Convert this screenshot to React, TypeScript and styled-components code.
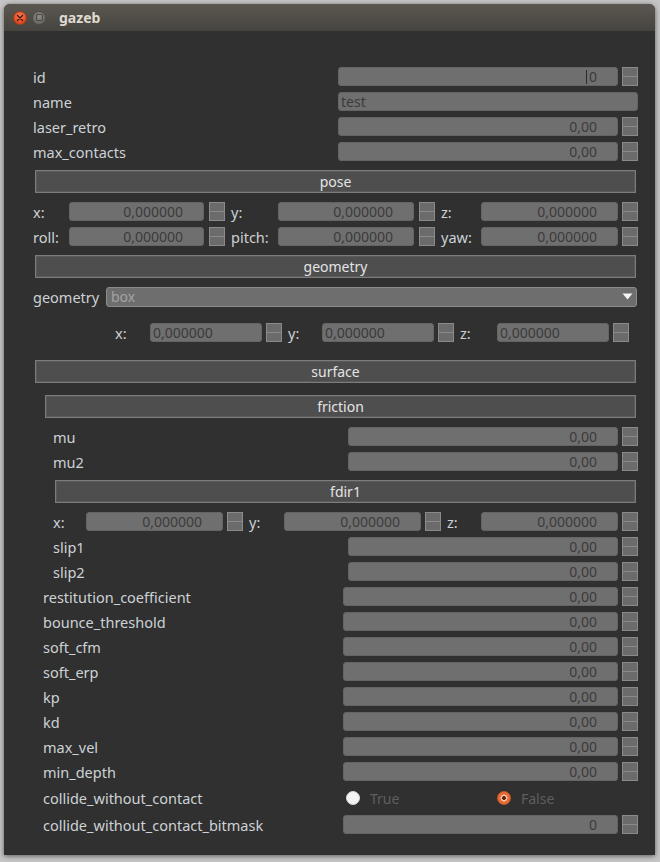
import React from "react";
import styled, { createGlobalStyle } from "styled-components";

const GlobalStyle = createGlobalStyle`
  html, body { margin: 0; padding: 0; }
  body { background: #c5c5c5; font-family: "Noto Sans", "DejaVu Sans", sans-serif; }
`;

const Screen = styled.div`
  width: 660px;
  height: 862px;
  box-sizing: border-box;
  padding: 4px 5px 7px 4px;
  background: #c5c5c5;
`;

const Window = styled.div`
  height: 100%;
  display: flex;
  flex-direction: column;
  border-radius: 6px 6px 0 0;
  overflow: hidden;
  background: #303030;
  box-shadow: 0 1px 5px rgba(0, 0, 0, 0.55);
`;

const TitleBar = styled.div`
  flex: none;
  height: 27px;
  display: flex;
  align-items: center;
  padding-left: 9px;
  background: linear-gradient(to bottom, #5b5750, #46443f);
`;

const WinButton = styled.span<{ $close?: boolean }>`
  flex: none;
  width: 14px;
  height: 14px;
  border-radius: 50%;
  box-sizing: border-box;
  display: flex;
  align-items: center;
  justify-content: center;
  margin-right: ${(p) => (p.$close ? 5 : 13)}px;
  background: ${(p) =>
    p.$close
      ? "radial-gradient(circle at 50% 35%, #f57f58, #e04a1f 70%)"
      : "radial-gradient(circle at 50% 35%, #8c8a85, #6c6a65 70%)"};
  border: 1px solid ${(p) => (p.$close ? "#a53a1a" : "#4f4d49")};
`;

const MinSquare = styled.span`
  width: 5px;
  height: 5px;
  border: 1px solid #4a4844;
  border-radius: 1px;
`;

const Title = styled.span`
  color: #dfdbd2;
  font-weight: bold;
  font-size: 14px;
`;

const Body = styled.div`
  flex: 1;
  display: flex;
  flex-direction: column;
  padding: 33px 17px 0 29px;
`;

const Row = styled.div<{ $indent?: number; $h?: number }>`
  flex: none;
  display: flex;
  align-items: center;
  height: ${(p) => p.$h ?? 25}px;
  padding-left: ${(p) => p.$indent ?? 0}px;
`;

const Label = styled.span`
  flex: 1;
  color: #cdd2d6;
  font-size: 14.5px;
  white-space: nowrap;
`;

const FieldGroup = styled.div<{ $w: number }>`
  flex: none;
  width: ${(p) => p.$w}px;
  display: flex;
  align-items: center;
  gap: 4px;
`;

const Input = styled.div<{ $left?: boolean }>`
  flex: 1;
  min-width: 0;
  height: 19px;
  box-sizing: border-box;
  border-radius: 3px;
  background: #6f6f6f;
  border: 1px solid #646464;
  color: #3b3b3b;
  font-size: 14px;
  display: flex;
  align-items: center;
  justify-content: ${(p) => (p.$left ? "flex-start" : "flex-end")};
  padding: ${(p) => (p.$left ? "0 0 0 2px" : "0 20px 0 2px")};
  white-space: nowrap;
  overflow: hidden;
`;

const Caret = styled.span`
  width: 1px;
  height: 14px;
  background: #2a2a2a;
  margin-right: 2px;
`;

const SpinBox = styled.div`
  flex: none;
  width: 16px;
  height: 19px;
  box-sizing: border-box;
  display: flex;
  flex-direction: column;
  justify-self: end;
`;

const SpinHalf = styled.span`
  flex: 1;
  border: 1px solid #8a8a8a;
  background: #6b6b6b;
  & + & {
    border-top: none;
  }
`;

const Header = styled.div<{ $indent?: number }>`
  flex: none;
  height: 23px;
  box-sizing: border-box;
  margin: 6px 2px 6px ${(p) => (p.$indent ?? 0) + 2}px;
  border: 1px solid #7c7c7c;
  box-shadow: inset 0 0 0 1px #5a5a5a;
  background: #4e4e4e;
  color: #e4e4e4;
  font-size: 14px;
  display: flex;
  align-items: center;
  justify-content: center;
`;

const VecRow = styled.div<{ $cols: string; $indent?: number; $mt?: number; $mb?: number; $mr?: number }>`
  flex: none;
  display: grid;
  grid-template-columns: ${(p) => p.$cols};
  align-items: center;
  height: 25px;
  margin: ${(p) => `${p.$mt ?? 0}px ${p.$mr ?? 0}px ${p.$mb ?? 0}px ${p.$indent ?? 0}px`};
`;

const VecLabel = styled.span`
  color: #cdd2d6;
  font-size: 14.5px;
  padding-left: 6px;
  white-space: nowrap;
  &:first-child {
    padding-left: 0;
  }
`;

const Combo = styled.div`
  flex: none;
  width: 531px;
  margin-right: 1px;
  height: 20px;
  box-sizing: border-box;
  border-radius: 3px;
  border: 1px solid #8c8c8c;
  background: #6e6e6e;
  color: #a2a2a2;
  font-size: 14px;
  display: flex;
  align-items: center;
  justify-content: space-between;
  padding: 0 3px 0 4px;
`;

const RadioGroup = styled.div`
  flex: none;
  width: 295px;
  box-sizing: border-box;
  padding-left: 3px;
  display: grid;
  grid-template-columns: 151px 1fr;
`;

const RadioOption = styled.label`
  display: flex;
  align-items: center;
  gap: 10px;
  color: #5f5f5f;
  font-size: 14px;
`;

const RadioDot = styled.span<{ $checked?: boolean }>`
  width: 14px;
  height: 14px;
  border-radius: 50%;
  box-sizing: border-box;
  background: ${(p) =>
    p.$checked
      ? "radial-gradient(circle, #5a2a14 0 1.8px, #f6c3a6 2.2px 3.2px, #e86b35 3.8px)"
      : "#f3f3f3"};
  border: 1px solid ${(p) => (p.$checked ? "#c65525" : "#d8d8d8")};
`;

const Spinner = () => (
  <SpinBox>
    <SpinHalf />
    <SpinHalf />
  </SpinBox>
);

type NumRowProps = { label: string; value?: string; indent?: number; caret?: boolean };

const NumRow = ({ label, value = "0,00", indent = 0, caret }: NumRowProps) => (
  <Row $indent={indent}>
    <Label>{label}</Label>
    <FieldGroup $w={300 - indent / 2}>
      <Input>
        {caret && <Caret />}
        {value}
      </Input>
      <Spinner />
    </FieldGroup>
  </Row>
);

type VecProps = {
  labels: string[];
  cols: string;
  indent?: number;
  left?: boolean;
  mt?: number;
  mb?: number;
  mr?: number;
};

const Vec = ({ labels, cols, indent, left, mt, mb, mr }: VecProps) => (
  <VecRow $cols={cols} $indent={indent} $mt={mt} $mb={mb} $mr={mr}>
    {labels.map((l) => (
      <React.Fragment key={l}>
        <VecLabel>{l}</VecLabel>
        <Input $left={left}>0,000000</Input>
        <Spinner />
      </React.Fragment>
    ))}
  </VecRow>
);

const POSE_COLS = "36px 135px 21px 53px 136px 21px 46px 137px 20px";
const FDIR_COLS = "33px 137px 20px 41px 137px 20px 40px 137px 20px";
const GEO_COLS = "35px 112px 20px 40px 112px 20px 43px 112px 20px";

const surfaceRows = [
  "restitution_coefficient",
  "bounce_threshold",
  "soft_cfm",
  "soft_erp",
  "kp",
  "kd",
  "max_vel",
  "min_depth",
];

export default function App() {
  return (
    <>
      <GlobalStyle />
      <Screen>
        <Window>
          <TitleBar>
            <WinButton $close>
              <svg width="8" height="8" viewBox="0 0 8 8">
                <path d="M1.5 1.5 L6.5 6.5 M6.5 1.5 L1.5 6.5" stroke="#4a1608" strokeWidth="1.4" strokeLinecap="round" />
              </svg>
            </WinButton>
            <WinButton>
              <MinSquare />
            </WinButton>
            <Title>gazeb</Title>
          </TitleBar>
          <Body>
            <NumRow label="id" value="0" caret />
            <Row>
              <Label>name</Label>
              <FieldGroup $w={300}>
                <Input $left>test</Input>
              </FieldGroup>
            </Row>
            <NumRow label="laser_retro" />
            <NumRow label="max_contacts" />

            <Header>pose</Header>
            <Vec labels={["x:", "y:", "z:"]} cols={POSE_COLS} />
            <Vec labels={["roll:", "pitch:", "yaw:"]} cols={POSE_COLS} />

            <Header>geometry</Header>
            <Row>
              <Label>geometry</Label>
              <Combo>
                <span>box</span>
                <svg width="11" height="7" viewBox="0 0 11 7">
                  <path d="M0.5 0.5 H10.5 L5.5 6.5 Z" fill="#f4f4f4" />
                </svg>
              </Combo>
            </Row>
            <Vec labels={["x:", "y:", "z:"]} cols={GEO_COLS} indent={82} mr={9} left mt={11} mb={9} />

            <Header>surface</Header>
            <Header $indent={10}>friction</Header>
            <NumRow label="mu" indent={20} />
            <NumRow label="mu2" indent={20} />
            <Header $indent={20}>fdir1</Header>
            <Vec labels={["x:", "y:", "z:"]} cols={FDIR_COLS} indent={20} />
            <NumRow label="slip1" indent={20} />
            <NumRow label="slip2" indent={20} />
            {surfaceRows.map((l) => (
              <NumRow key={l} label={l} indent={10} />
            ))}
            <Row $indent={10} $h={28}>
              <Label>collide_without_contact</Label>
              <RadioGroup>
                <RadioOption>
                  <RadioDot />
                  True
                </RadioOption>
                <RadioOption>
                  <RadioDot $checked />
                  False
                </RadioOption>
              </RadioGroup>
            </Row>
            <NumRow label="collide_without_contact_bitmask" value="0" indent={10} />
          </Body>
        </Window>
      </Screen>
    </>
  );
}
